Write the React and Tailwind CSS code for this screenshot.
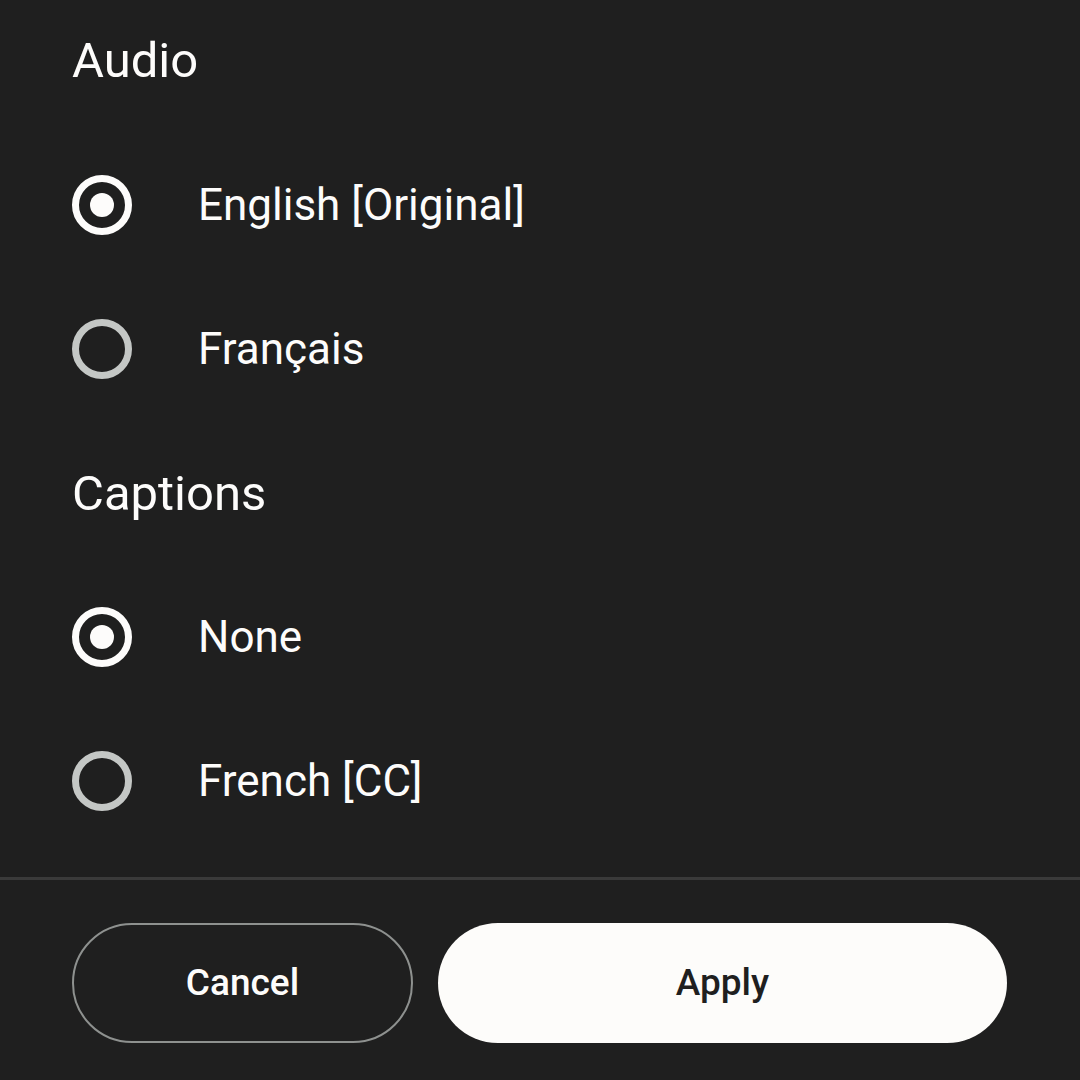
import { useState } from 'react'

const audioOptions = ['English [Original]', 'Français']
const captionOptions = ['None', 'French [CC]']

function Radio({ checked }) {
  return (
    <span
      className={`flex h-[60px] w-[60px] shrink-0 items-center justify-center rounded-full border-[7px] ${
        checked ? 'border-[#fdfcfb]' : 'border-[#c4c7c5]'
      }`}
    >
      {checked && <span className="h-[24px] w-[24px] rounded-full bg-[#fdfcfb]" />}
    </span>
  )
}

function OptionRow({ label, checked, onSelect }) {
  return (
    <button
      type="button"
      onClick={onSelect}
      className="flex h-[144px] w-full items-center gap-[66px] text-left"
    >
      <Radio checked={checked} />
      <span className="text-[44px] leading-none text-[#fdfcfb]">{label}</span>
    </button>
  )
}

export default function App() {
  const [audio, setAudio] = useState(0)
  const [captions, setCaptions] = useState(0)

  return (
    <div
      className="flex h-[1080px] w-[1080px] flex-col overflow-hidden bg-[#1f1f1f]"
      style={{ fontFamily: 'Roboto, "Noto Sans", sans-serif' }}
    >
      <div className="flex flex-col px-[72px]">
        <h2 className="mb-[13px] flex h-[120px] items-center text-[49px] font-normal leading-none text-[#fdfcfb]">
          Audio
        </h2>
        {audioOptions.map((opt, i) => (
          <OptionRow key={opt} label={opt} checked={audio === i} onSelect={() => setAudio(i)} />
        ))}
        <h2 className="flex h-[144px] items-center text-[49px] font-normal leading-none text-[#fdfcfb]">
          Captions
        </h2>
        {captionOptions.map((opt, i) => (
          <OptionRow key={opt} label={opt} checked={captions === i} onSelect={() => setCaptions(i)} />
        ))}
      </div>

      <div className="mt-[24px] h-[3px] w-full bg-[#3a3a3a]" />

      <div className="mt-[43px] flex gap-[25px] pl-[72px] pr-[73px]">
        <button
          type="button"
          className="flex h-[120px] w-[341px] items-center justify-center rounded-full border-2 border-[#8e918f] text-[37px] font-medium text-[#fdfcfb]"
        >
          Cancel
        </button>
        <button
          type="button"
          className="flex h-[120px] flex-1 items-center justify-center rounded-full bg-[#fdfcfa] text-[37px] font-medium text-[#1f1f1f]"
        >
          Apply
        </button>
      </div>
    </div>
  )
}
